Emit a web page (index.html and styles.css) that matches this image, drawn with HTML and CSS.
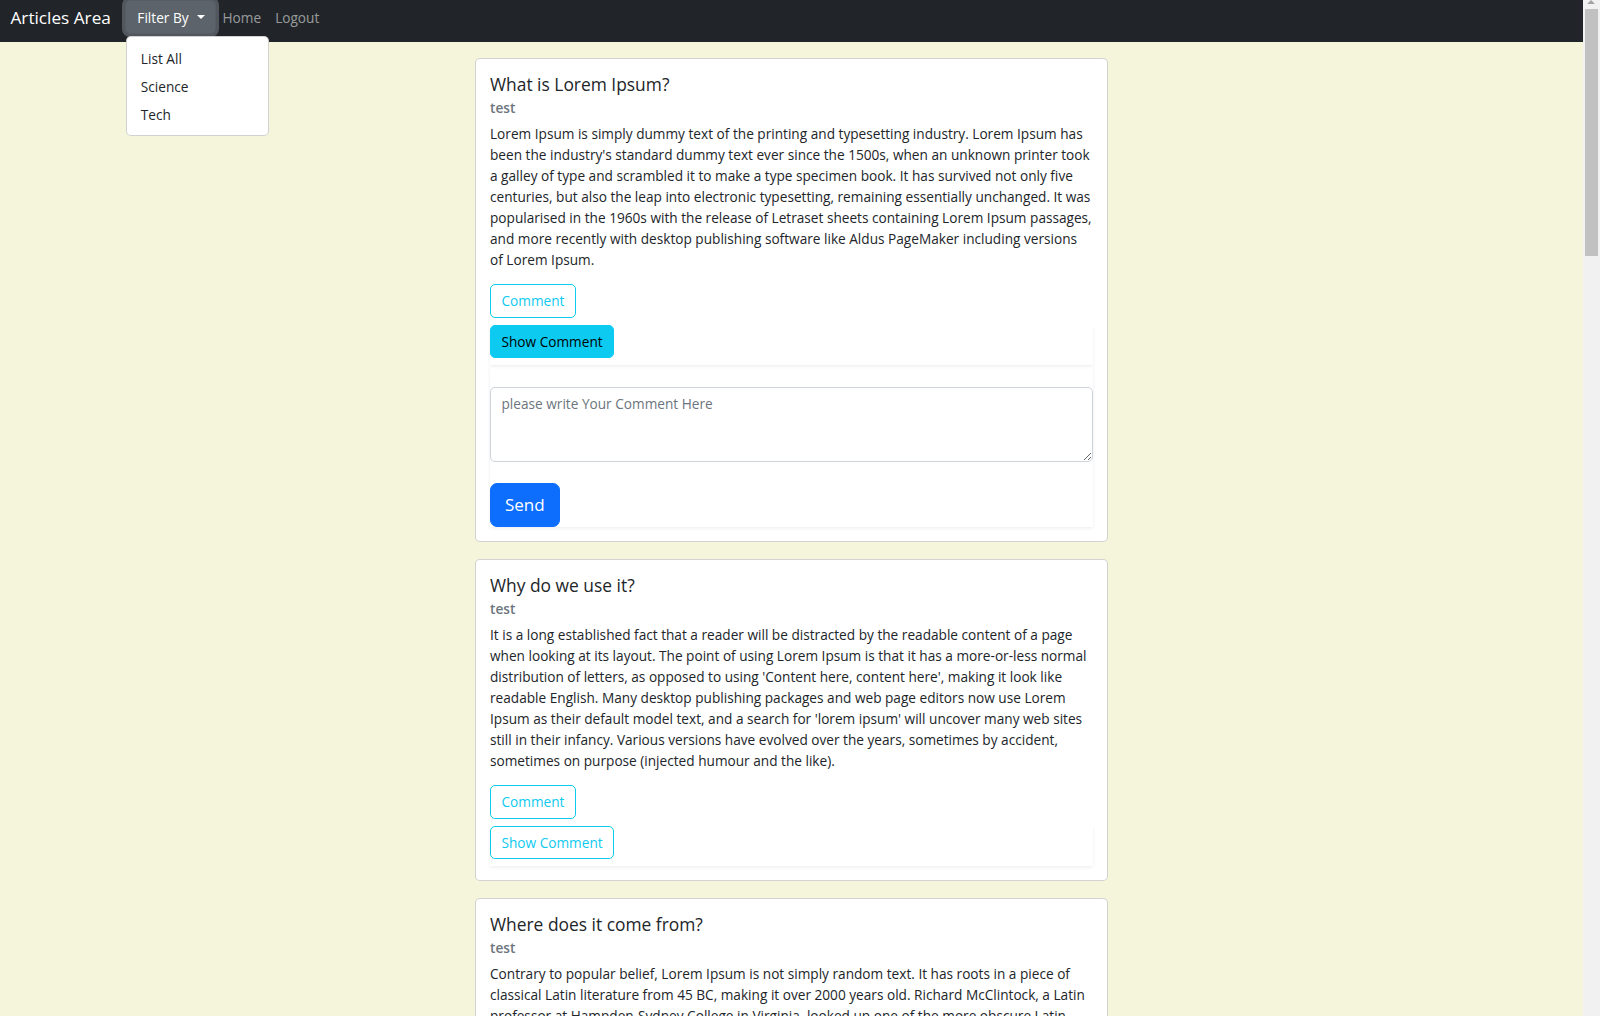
FILE: index.html
```html
<!DOCTYPE html>
<html lang="en">
<head>
<meta charset="utf-8">
<title>Articles Area</title>
<link rel="stylesheet" href="styles.css">
</head>
<body>
<nav class="navbar">
  <a class="brand" href="#">Articles Area</a>
  <div class="dropdown">
    <button class="btn-filter">Filter By<span class="caret"></span></button>
    <ul class="dropdown-menu">
      <li><a href="#">List All</a></li>
      <li><a href="#">Science</a></li>
      <li><a href="#">Tech</a></li>
    </ul>
  </div>
  <a class="nav-link" href="#">Home</a>
  <a class="nav-link" href="#">Logout</a>
</nav>

<main class="articles">
  <article class="card">
    <h5 class="card-title">What is Lorem Ipsum?</h5>
    <h6 class="card-subtitle">test</h6>
    <p class="card-text">Lorem Ipsum is simply dummy text of the printing and typesetting industry. Lorem Ipsum has been the industry's standard dummy text ever since the 1500s, when an unknown printer took a galley of type and scrambled it to make a type specimen book. It has survived not only five centuries, but also the leap into electronic typesetting, remaining essentially unchanged. It was popularised in the 1960s with the release of Letraset sheets containing Lorem Ipsum passages, and more recently with desktop publishing software like Aldus PageMaker including versions of Lorem Ipsum.</p>
    <button class="btn btn-outline-info">Comment</button>
    <div class="comments">
      <div class="comments-head"><button class="btn btn-info">Show Comment</button></div>
      <form class="comments-form">
        <textarea class="form-control" rows="3" placeholder="please write Your Comment Here"></textarea>
        <button class="btn btn-primary btn-lg" type="button">Send</button>
      </form>
    </div>
  </article>

  <article class="card">
    <h5 class="card-title">Why do we use it?</h5>
    <h6 class="card-subtitle">test</h6>
    <p class="card-text">It is a long established fact that a reader will be distracted by the readable content of a page when looking at its layout. The point of using Lorem Ipsum is that it has a more-or-less normal distribution of letters, as opposed to using 'Content here, content here', making it look like readable English. Many desktop publishing packages and web page editors now use Lorem Ipsum as their default model text, and a search for 'lorem ipsum' will uncover many web sites still in their infancy. Various versions have evolved over the years, sometimes by accident, sometimes on purpose (injected humour and the like).</p>
    <button class="btn btn-outline-info">Comment</button>
    <div class="comments">
      <div class="comments-head"><button class="btn btn-outline-info">Show Comment</button></div>
    </div>
  </article>

  <article class="card">
    <h5 class="card-title">Where does it come from?</h5>
    <h6 class="card-subtitle">test</h6>
    <p class="card-text">Contrary to popular belief, Lorem Ipsum is not simply random text. It has roots in a piece of classical Latin literature from 45 BC, making it over 2000 years old. Richard McClintock, a Latin professor at Hampden-Sydney College in Virginia, looked up one of the more obscure Latin words, consectetur, from a Lorem Ipsum passage, and going through the cites of the word in classical literature, discovered the undoubtable source. Lorem Ipsum comes from sections 1.10.32 and 1.10.33 of "de Finibus Bonorum et Malorum" (The Extremes of Good and Evil) by Cicero, written in 45 BC. This book is a treatise on the theory of ethics, very popular during the Renaissance. The first line of Lorem Ipsum, "Lorem ipsum dolor sit amet..", comes from a line in section 1.10.32.</p>
    <button class="btn btn-outline-info">Comment</button>
    <div class="comments">
      <div class="comments-head"><button class="btn btn-outline-info">Show Comment</button></div>
    </div>
  </article>
</main>

<div class="scrollbar" aria-hidden="true">
  <span class="scrollbar-arrow"></span>
  <span class="scrollbar-thumb"></span>
</div>
</body>
</html>
```
FILE: styles.css
```css
:root {
  --font: "Open Sans", "Noto Sans", sans-serif;
  --fs: 13.65px;
}
html, body { margin: 0; padding: 0; }
body {
  box-sizing: border-box;
  padding-right: 17px;
  background: #f5f5dc;
  color: #212529;
  font-family: var(--font);
  font-size: var(--fs);
  line-height: 21px;
}

.navbar {
  display: flex;
  align-items: flex-start;
  height: 42px;
  box-sizing: border-box;
  padding: 0 10.5px;
  background: #212529;
}
.brand {
  font-size: 17.2px;
  line-height: 26px;
  padding-top: 5px;
  margin-right: 14px;
  color: #fff;
  text-decoration: none;
}
.dropdown { position: relative; }
.btn-filter {
  display: flex;
  align-items: center;
  height: 34px;
  padding: 0 10px 0 11.5px;
  font-family: var(--font);
  font-size: var(--fs);
  color: #fff;
  background: #5c636a;
  border: 1px solid #565e64;
  border-radius: 5px;
  box-shadow: 0 0 0 3px rgba(130, 138, 145, .5);
}
.caret {
  margin-left: 8px;
  margin-top: -1px;
  border-top: 4.5px solid #fff;
  border-left: 4.5px solid transparent;
  border-right: 4.5px solid transparent;
}
.dropdown-menu {
  position: absolute;
  top: 36px;
  left: 1px;
  z-index: 5;
  width: 141px;
  margin: 0;
  padding: 7px 0;
  list-style: none;
  background: #fff;
  border: 1px solid rgba(0, 0, 0, .175);
  border-radius: 5px;
}
.dropdown-menu a {
  display: block;
  padding: 3.5px 14px;
  color: #212529;
  text-decoration: none;
}
.nav-link {
  padding: 7px 7px 0;
  line-height: 21px;
  color: rgba(255, 255, 255, .55);
  text-decoration: none;
}

.articles {
  width: 633px;
  margin: 16px auto 0;
}
.card {
  background: #fff;
  border: 1px solid rgba(0, 0, 0, .175);
  border-radius: 5px;
  padding: 14px;
  margin-bottom: 17.5px;
}
.card-title {
  font-size: 17.4px;
  font-weight: 500;
  line-height: 21px;
  margin: 1px 0 7px;
}
.card-subtitle {
  font-size: var(--fs);
  font-weight: 600;
  line-height: 17px;
  color: #6c757d;
  margin: -3.5px 0 7.5px;
}
.card-text { margin: 0 0 14px; }

.btn {
  display: inline-block;
  font-family: var(--font);
  font-size: var(--fs);
  line-height: 21px;
  padding: 5.25px 10.5px;
  border: 1px solid transparent;
  border-radius: 5px;
  background: transparent;
}
.btn-outline-info { color: #0dcaf0; border-color: #0dcaf0; }
.btn-info { color: #000; background: #0dcaf0; border-color: #0dcaf0; }
.btn-primary { color: #fff; background: #0d6efd; border-color: #0d6efd; }
.btn-lg {
  font-size: 17px;
  line-height: 26px;
  padding: 8px 14px;
  border-radius: 7px;
}

.comments { margin-top: 7px; }
.comments-head {
  height: 40px;
  box-shadow: 0 1.75px 3.5px rgba(0, 0, 0, .075);
}
.comments-form {
  margin: 0;
  padding-top: 22px;
  box-shadow: 0 1.75px 3.5px rgba(0, 0, 0, .075);
}
.form-control {
  display: block;
  box-sizing: border-box;
  width: 100%;
  height: 75.5px;
  margin-bottom: 20.5px;
  padding: 5.25px 10.5px;
  font-family: var(--font);
  font-size: var(--fs);
  line-height: 21px;
  color: #212529;
  border: 1px solid #ced4da;
  border-radius: 5px;
  resize: vertical;
}
.form-control::placeholder { color: #6c757d; }
.comments-form .btn-lg { display: block; }

.scrollbar {
  position: fixed;
  top: 0;
  right: 0;
  width: 17px;
  height: 100%;
  background: #f1f1f1;
}
.scrollbar-arrow {
  position: absolute;
  top: 0;
  left: 4px;
  border-bottom: 4px solid #a3a3a3;
  border-left: 4.5px solid transparent;
  border-right: 4.5px solid transparent;
}
.scrollbar-thumb {
  position: absolute;
  top: 9px;
  left: 2px;
  width: 13px;
  height: 247px;
  background: #c1c1c1;
}
```
